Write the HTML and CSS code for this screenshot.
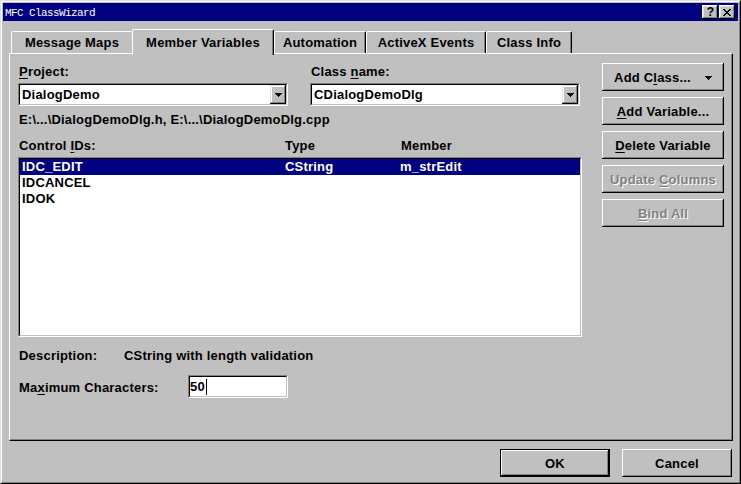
FILE: index.html
```html
<!DOCTYPE html>
<html>
<head>
<meta charset="utf-8">
<title>MFC ClassWizard</title>
<link rel="stylesheet" href="styles.css">
</head>
<body>
<div class="window">
  <div class="frame">
    <div class="titlebar">
      <span class="title">MFC ClassWizard</span>
      <div class="tbtns">
        <div class="tbtn help">?</div>
        <div class="tbtn close">
          <svg width="8" height="7" viewBox="0 0 8 7"><path d="M0 0h2v1H0zM6 0h2v1H6zM1 1h2v1H1zM5 1h2v1H5zM2 2h4v1H2zM3 3h2v1H3zM2 4h4v1H2zM1 5h2v1H1zM5 5h2v1H5zM0 6h2v1H0zM6 6h2v1H6z" fill="#000"/></svg>
        </div>
      </div>
    </div>
    <div class="body">
      <div class="tabs">
        <div class="tab t1">Message Maps</div>
        <div class="tab t2 sel">Member Variables</div>
        <div class="tab t3">Automation</div>
        <div class="tab t4">ActiveX Events</div>
        <div class="tab t5">Class Info</div>
      </div>
      <div class="page">
        <div class="left">
          <div class="combos">
            <div class="field">
              <div class="label"><u>P</u>roject:</div>
              <div class="combo">
                <div class="combo-in">
                  <span class="ctext">DialogDemo</span>
                  <div class="dropbtn"><svg width="7" height="4" viewBox="0 0 7 4"><path d="M0 0h7v1H0zM1 1h5v1H1zM2 2h3v1H2zM3 3h1v1H3z" fill="#000"/></svg></div>
                </div>
              </div>
            </div>
            <div class="field">
              <div class="label">Class <u>n</u>ame:</div>
              <div class="combo">
                <div class="combo-in">
                  <span class="ctext">CDialogDemoDlg</span>
                  <div class="dropbtn"><svg width="7" height="4" viewBox="0 0 7 4"><path d="M0 0h7v1H0zM1 1h5v1H1zM2 2h3v1H2zM3 3h1v1H3z" fill="#000"/></svg></div>
                </div>
              </div>
            </div>
          </div>
          <div class="path">E:\...\DialogDemoDlg.h, E:\...\DialogDemoDlg.cpp</div>
          <div class="hdr"><span>Control <u>I</u>Ds:</span><span>Type</span><span>Member</span></div>
          <div class="list">
            <div class="list-in">
              <div class="row sel"><span>IDC_EDIT</span><span>CString</span><span>m_strEdit</span></div>
              <div class="row"><span>IDCANCEL</span><span></span><span></span></div>
              <div class="row"><span>IDOK</span><span></span><span></span></div>
            </div>
          </div>
          <div class="desc"><span>Description:</span><span>CString with length validation</span></div>
          <div class="maxrow">
            <span class="maxlabel">Ma<u>x</u>imum Characters:</span>
            <div class="edit"><div class="edit-in">50<span class="caret"></span></div></div>
          </div>
        </div>
        <div class="right">
          <div class="btn addclass"><span>Add C<u>l</u>ass...</span><svg width="7" height="4" viewBox="0 0 7 4"><path d="M0 0h7v1H0zM1 1h5v1H1zM2 2h3v1H2zM3 3h1v1H3z" fill="#000"/></svg></div>
          <div class="btn"><span><u>A</u>dd Variable...</span></div>
          <div class="btn"><span><u>D</u>elete Variable</span></div>
          <div class="btn dis"><span>Update <u>C</u>olumns</span></div>
          <div class="btn dis"><span><u>B</u>ind All</span></div>
        </div>
      </div>
      <div class="footer">
        <div class="btn wide def"><span>OK</span></div>
        <div class="btn wide"><span>Cancel</span></div>
      </div>
    </div>
  </div>
</div>
</body>
</html>
```
FILE: styles.css
```css
* { box-sizing: border-box; }
html, body { margin: 0; padding: 0; }
body {
  width: 741px;
  height: 484px;
  overflow: hidden;
  background: #c0c0c0;
  color: #000;
  font: bold 13px/16px "Liberation Sans", Arial, sans-serif;
  letter-spacing: 0.2px;
}
u { text-decoration: underline; text-underline-offset: 2px; }

.window {
  width: 741px;
  height: 484px;
  border: 1px solid;
  border-color: #dfdfdf #000 #000 #dfdfdf;
}
.frame {
  height: 100%;
  border: 1px solid;
  border-color: #fff #808080 #808080 #fff;
  padding: 1px;
  display: flex;
  flex-direction: column;
}

/* title bar */
.titlebar {
  height: 18px;
  flex: none;
  background: #000080;
  display: flex;
  align-items: center;
  justify-content: space-between;
  padding: 0 3px 0 2px;
}
.title {
  align-self: stretch;
  height: 18px;
  padding-top: 2px;
  line-height: 16px;
  color: #fff;
  font: normal 11px/16px "Liberation Mono", "DejaVu Sans Mono", monospace;
  letter-spacing: -0.6px;
}
.tbtns { display: flex; gap: 1px; }
.tbtn {
  width: 16px;
  height: 14px;
  background: #c0c0c0;
  box-shadow: inset -1px -1px #000, inset 1px 1px #fff, inset -2px -2px #808080, inset 2px 2px #dfdfdf;
  display: flex;
  align-items: center;
  justify-content: center;
}
.tbtn.help {
  font: bold 12px/12px "Liberation Sans", Arial, sans-serif;
  letter-spacing: 0;
  padding-left: 1px;
}
.tbtn svg { display: block; }

/* dialog body */
.body {
  flex: 1;
  padding: 8px 5px 0 6px;
  display: flex;
  flex-direction: column;
}

/* tabs */
.tabs {
  height: 24px;
  flex: none;
  display: flex;
  align-items: flex-end;
  padding-left: 2px;
}
.tab {
  height: 22px;
  padding-top: 3px;
  text-align: center;
  white-space: nowrap;
  background: #c0c0c0;
  border-top: 1px solid #fff;
  border-left: 1px solid #fff;
  border-right: 1px solid #000;
  border-radius: 2px 2px 0 0;
  box-shadow: inset -1px 0 #808080;
}
.t1 { width: 121px; border-right: none; box-shadow: none; }
.t2 { width: 142px; }
.t3 { width: 92px; }
.t4 { width: 120px; }
.t5 { width: 86px; }
.tab.sel {
  height: 26px;
  margin-bottom: -2px;
  padding-top: 5px;
  position: relative;
  z-index: 1;
}

/* tab page */
.page {
  height: 388px;
  flex: none;
  border: 1px solid;
  border-color: #fff #000 #000 #fff;
  box-shadow: inset -1px -1px #808080;
  padding: 9px 8px 0 8px;
  display: flex;
  gap: 20px;
}
.left {
  width: 564px;
  display: flex;
  flex-direction: column;
}
.combos {
  display: flex;
  gap: 22px;
  margin-top: 1px;
}
.field { width: 270px; }
.label { padding-left: 1px; }

.combo, .list, .edit {
  border: 1px solid;
  border-color: #808080 #fff #fff #808080;
}
.combo-in, .list-in, .edit-in {
  height: 100%;
  border: 1px solid;
  border-color: #000 #c0c0c0 #c0c0c0 #000;
  background: #fff;
}
.combo { margin-top: 3px; height: 23px; }
.combo-in { display: flex; align-items: center; }
.ctext { padding-left: 2px; }
.dropbtn {
  margin-left: auto;
  width: 16px;
  height: 100%;
  background: #c0c0c0;
  box-shadow: inset -1px -1px #000, inset 1px 1px #dfdfdf, inset -2px -2px #808080, inset 2px 2px #fff;
  display: flex;
  align-items: center;
  justify-content: center;
  padding-top: 1px;
}
.dropbtn svg, .btn svg { display: block; }

.path { margin-top: 6px; padding-left: 1px; white-space: nowrap; }
.hdr {
  margin-top: 10px;
  padding-left: 1px;
  display: grid;
  grid-template-columns: 266px 116px auto;
}
.list { margin-top: 3px; height: 180px; }
.row {
  height: 16px;
  padding-left: 2px;
  display: grid;
  grid-template-columns: 263px 115px auto;
  white-space: nowrap;
}
.row.sel { background: #000080; color: #fff; }

.desc {
  margin-top: 11px;
  padding-left: 1px;
  display: grid;
  grid-template-columns: 105px auto;
}
.maxrow {
  margin-top: 11px;
  height: 23px;
  display: flex;
}
.maxlabel {
  width: 170px;
  padding-left: 1px;
  margin-top: 5px;
}
.edit { width: 100px; height: 23px; }
.edit-in { display: flex; align-items: center; }
.caret {
  display: inline-block;
  width: 1px;
  height: 16px;
  margin-left: 1px;
  background: #000;
}

/* buttons */
.right {
  width: 122px;
  display: flex;
  flex-direction: column;
  gap: 6px;
}
.btn {
  height: 28px;
  flex: none;
  background: #c0c0c0;
  box-shadow: inset -1px -1px #000, inset 1px 1px #fff, inset -2px -2px #808080;
  display: flex;
  align-items: center;
  justify-content: center;
  padding-top: 1px;
  white-space: nowrap;
}
.btn.addclass { gap: 14px; }
.btn.dis { color: #808080; text-shadow: 1px 1px 0 #fff; }
.footer {
  margin-top: 8px;
  padding-right: 1px;
  display: flex;
  justify-content: flex-end;
  gap: 12px;
}
.btn.wide { width: 110px; }
.btn.def {
  border: 1px solid #000;
}
```
